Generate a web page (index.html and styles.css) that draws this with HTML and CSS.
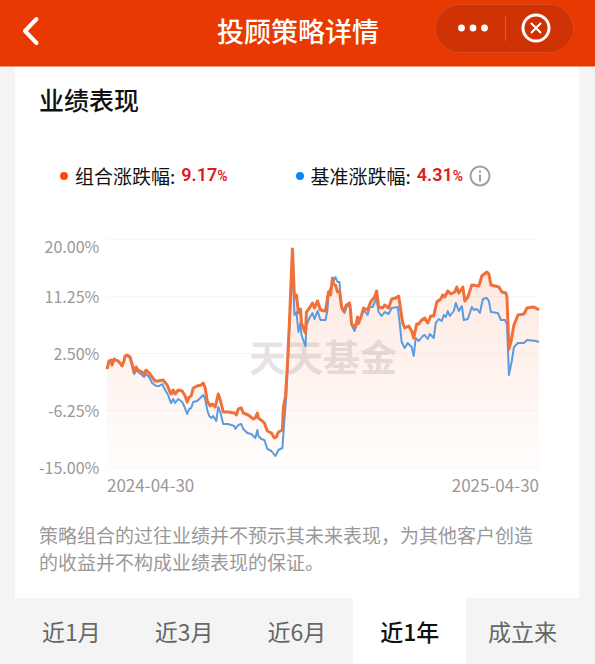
FILE: index.html
```html
<!DOCTYPE html>
<html lang="zh-CN">
<head>
  <meta charset="UTF-8">
  <meta name="viewport" content="width=device-width, initial-scale=1.0">
  <title>投顾策略详情</title>
  <link rel="stylesheet" href="styles.css">
</head>
<body>
  <header class="header">
    <a href="#" class="back" aria-label="返回">
      <svg width="18" height="30" viewBox="0 0 18 30"><path d="M14.5 3 3 15l11.500 12" /></svg>
    </a>
    <h1>投顾策略详情</h1>
    <div class="capsule">
      <button type="button" aria-label="更多">
        <svg width="32" height="30" viewBox="0 0 32 30">
          <circle cx="4.500" cy="15" r="3.400" />
          <circle cx="16" cy="15" r="3.400" />
          <circle cx="27.500" cy="15" r="3.400" />
        </svg>
      </button>
      <button type="button" aria-label="关闭">
        <svg class="close-icon" width="30" height="30" viewBox="0 0 30 30">
          <circle cx="15" cy="15" r="13" />
          <path d="M10.500 10.500l9 9M19.500 10.500l-9 9" />
        </svg>
      </button>
    </div>
  </header>

  <main class="container">
    <section class="card">
      <h2>业绩表现</h2>

      <!-- 图例 -->
      <div class="legend">
        <div class="legend-item">
          <span class="dot dot-orange"></span>
          <span>组合涨跌幅:</span>
          <span class="rate">9.17<small>%</small></span>
        </div>
        <div class="legend-item">
          <span class="dot dot-blue"></span>
          <span>基准涨跌幅:</span>
          <span class="rate">4.31<small>%</small></span>
          <button type="button" class="info" aria-label="说明">
            <svg width="22" height="22" viewBox="0 0 22 22">
              <circle cx="11" cy="11" r="9.500" />
              <path d="M11 9.500v7" />
              <path d="M11 5.500v2.200" />
            </svg>
          </button>
        </div>
      </div>

      <!-- 走势图 -->
      <div class="chart">
        <ul class="y-axis">
          <li>20.00%</li>
          <li>11.25%</li>
          <li>2.50%</li>
          <li>-6.25%</li>
          <li>-15.00%</li>
        </ul>
        <div class="plot">
          <svg viewBox="107 238 431 230" preserveAspectRatio="none">
            <defs>
              <linearGradient id="area" x1="0" y1="0" x2="0" y2="1">
                <stop offset="0" stop-color="#fb6a35" stop-opacity="0.17" />
                <stop offset="0.5" stop-color="#fb6a35" stop-opacity="0.09" />
                <stop offset="1" stop-color="#fb6a35" stop-opacity="0.01" />
              </linearGradient>
            </defs>
            <path class="grid-line" d="M107 239.500H538M107 296.500H538M107 353.500H538M107 410.500H538M107 467.500H538" />
            <path fill="url(#area)" d="M107 467V369L109 361 111 360 112 365 114 359 118 361 120 363 122 366 124 361 125 356 127 355 130 357 132 364 134 372 136 367 138 370 142 372 144 374 146 370 149 373 152 377 155 381 158 381 163 380 167 385 169 390 171 394 173 390 175 394 178 390 182 391 185 396 187 402 189 397 191 396 193 388 197 386 201 385 203 383 205 388 207 401 210 406 212 404 215 407 218 394 220 400 223 412 228 412 234 413 236 415 238 409 241 408 243 413 248 415 253 419 255 418 257 413 258 418 262 421 264 423 267 431 271 433 274 438 276 437 278 432 282 430 283 407 285 397 287 365 289 322 292 249 294 298 296 295 298 313 300 309 301 323 305 333 306 312 309 308 312 303 314 308 317 301 320 310 325 311 327 298 328 292 330 295 332 278 333 284 335 285 337 292 339 291 341 307 343 311 346 305 349 303 350 310 351 324 355 327 357 317 358 323 361 315 363 308 367 310 370 302 374 297 376 291 378 307 382 308 384 305 388 308 391 299 395 298 398 296 400 310 402 323 404 328 408 326 411 331 413 338 416 324 418 324 421 320 424 318 427 323 430 316 433 316 436 302 440 299 442 295 444 297 447 291 450 294 454 292 456 287 458 293 462 287 464 301 467 297 471 285 478 286 481 276 486 272 488 274 490 285 498 287 501 292 505 293 506 297 508 349 510 342 513 325 517 315 523 314 526 308 532 307 535 308 538 310V467Z" />
            <polyline class="line line-blue" points="107,369 109,361 111,360 112,365 114,359 118,361 120,363 122,366 124,361 125,356 127,356 130,358 132,366 134,374 137,370 139,373 142,375 144,377 146,374 149,377 152,383 156,386 159,386 162,384 165,390 168,395 170,401 171,403 173,399 175,403 178,399 182,402 184,406 187,414 189,409 191,408 193,402 197,401 201,397 203,395 205,399 207,410 209,416 211,418 213,416 216,421 218,407 220,412 223,424 228,424 234,426 235,429 238,425 241,424 243,429 247,433 251,434 255,438 257,430 258,436 261,439 264,440 267,449 271,451 275,456 278,450 282,448 284,420 286,395 288,350 292,262 294,315 296,312 298,332 300,323 301,335 305,346 306,325 309,318 312,313 314,319 317,311 320,320 325,320 327,310 328,293 332,283 333,281 335,277 337,282 339,282 340,298 342,310 344,313 346,307 349,304 351,325 354,331 356,324 358,324 360,318 363,310 367,315 369,307 372,307 376,298 378,312 381,316 384,312 388,314 391,308 397,307 399,323 401,342 404,348 407,343 411,347 413,356 415,338 418,341 422,336 424,335 427,339 429,334 433,338 435,323 438,319 441,321 443,315 445,317 447,311 449,316 453,311 455,303 458,311 461,306 463,320 467,319 471,307 473,310 476,309 479,313 482,299 486,298 488,301 490,312 497,313 500,320 504,320 506,324 508,375 511,360 513,347 517,343 523,343 526,340 535,341 538,342" />
            <polyline class="line line-orange" points="107,369 109,361 111,360 112,365 114,359 118,361 120,363 122,366 124,361 125,356 127,355 130,357 132,364 134,372 136,367 138,370 142,372 144,374 146,370 149,373 152,377 155,381 158,381 163,380 167,385 169,390 171,394 173,390 175,394 178,390 182,391 185,396 187,402 189,397 191,396 193,388 197,386 201,385 203,383 205,388 207,401 210,406 212,404 215,407 218,394 220,400 223,412 228,412 234,413 236,415 238,409 241,408 243,413 248,415 253,419 255,418 257,413 258,418 262,421 264,423 267,431 271,433 274,438 276,437 278,432 282,430 283,407 285,397 287,365 289,322 292,249 294,298 296,295 298,313 300,309 301,323 305,333 306,312 309,308 312,303 314,308 317,301 320,310 325,311 327,298 328,292 330,295 332,278 333,284 335,285 337,292 339,291 341,307 343,311 346,305 349,303 350,310 351,324 355,327 357,317 358,323 361,315 363,308 367,310 370,302 374,297 376,291 378,307 382,308 384,305 388,308 391,299 395,298 398,296 400,310 402,323 404,328 408,326 411,331 413,338 416,324 418,324 421,320 424,318 427,323 430,316 433,316 436,302 440,299 442,295 444,297 447,291 450,294 454,292 456,287 458,293 462,287 464,301 467,297 471,285 478,286 481,276 486,272 488,274 490,285 498,287 501,292 505,293 506,297 508,349 510,342 513,325 517,315 523,314 526,308 532,307 535,308 538,310" />
          </svg>
          <span class="watermark">天天基金</span>
        </div>
        <div class="x-axis">
          <span>2024-04-30</span>
          <span>2025-04-30</span>
        </div>
      </div>

      <p class="notice">策略组合的过往业绩并不预示其未来表现，为其他客户创造的收益并不构成业绩表现的保证。</p>
    </section>

    <!-- 区间切换 -->
    <nav class="tabs">
      <button type="button">近1月</button>
      <button type="button">近3月</button>
      <button type="button">近6月</button>
      <button type="button" class="active">近1年</button>
      <button type="button">成立来</button>
    </nav>
  </main>
</body>
</html>
```

FILE: styles.css
```css
* {
  box-sizing: border-box;
}
body {
  margin: 0;
  background-color: #f4f4f4;
  color: #111;
  font-family: "Noto Sans CJK SC", sans-serif;
}
h1, h2, p, ul {
  margin: 0;
  padding: 0;
}
button {
  padding: 0;
  border: none;
  background: none;
  font-family: inherit;
  cursor: pointer;
}
svg {
  display: block;
}
.header {
  display: grid;
  grid-template-columns: 1fr auto 1fr;
  align-items: center;
  height: 67px;
  padding: 0 21px 10px 22px;
  background-color: #e93902;
  border-bottom: 1px solid #ee9a80;
  color: #fff;
}
.header h1 {
  padding-top: 6px;
  font-size: 27px;
  font-weight: 500;
  line-height: 36px;
}
.back {
  width: 18px;
  padding-top: 6px;
}
.back path {
  fill: none;
  stroke: #fff;
  stroke-width: 4;
  stroke-linecap: round;
  stroke-linejoin: round;
}
.capsule {
  display: flex;
  justify-self: end;
  width: 139px;
  height: 49px;
  border: 1px solid #dd4a20;
  border-radius: 25px;
  background-color: #cf3204;
}
.capsule button {
  flex: 1;
  display: flex;
  align-items: center;
  justify-content: center;
  position: relative;
  padding-left: 6px;
  fill: #fff;
}
.capsule button + button {
  padding: 0 6px 0 0;
}
.capsule button + button::before {
  content: "";
  position: absolute;
  left: 0;
  top: 11px;
  bottom: 11px;
  border-left: 1px solid #dc5a36;
}
.close-icon {
  fill: none;
  stroke: #fff;
  stroke-width: 3;
  stroke-linecap: round;
}
.close-icon path {
  stroke-width: 2;
}
.container {
  margin: 0 16px 0 15px;
}
.card {
  padding: 14px 40px 23px 24px;
  background-color: #fff;
}
.card h2 {
  font-size: 25px;
  font-weight: 500;
  line-height: 36px;
}
.legend {
  display: flex;
  margin: 44px 8px 48px 21px;
}
.legend-item {
  flex: 1;
  display: flex;
  align-items: center;
  font-size: 19px;
  line-height: 28px;
  white-space: nowrap;
}
.dot {
  width: 8px;
  height: 8px;
  margin-right: 7px;
  border-radius: 50%;
}
.dot-orange {
  background-color: #fc4c05;
}
.dot-blue {
  background-color: #0a87f5;
}
.rate {
  margin-left: 6px;
  color: #dd1a1e;
  font-family: "Liberation Sans Narrow", Roboto, sans-serif;
  font-size: 18px;
  font-weight: 600;
}
.rate small {
  font-size: 14px;
}
.info {
  margin-left: 6px;
}
.info svg {
  fill: none;
  stroke: #a0a0a0;
  stroke-width: 2;
}
.chart {
  display: grid;
  grid-template-columns: 60px 1fr;
  column-gap: 8px;
  color: #999;
}
.y-axis {
  display: grid;
  grid-template-rows: 16px 50px repeat(3, 57px);
  align-items: end;
  list-style: none;
  font-size: 16px;
  line-height: 16px;
  text-align: right;
}
.plot {
  position: relative;
}
.plot svg {
  width: 100%;
  height: 230px;
  overflow: visible;
}
.grid-line {
  stroke: #f7f5f5;
}
.line {
  fill: none;
  stroke-linejoin: round;
}
.line-blue {
  stroke: #5b9be0;
  stroke-width: 2;
}
.line-orange {
  stroke: #f0703a;
  stroke-width: 3;
}
.watermark {
  position: absolute;
  inset: 0;
  display: flex;
  align-items: center;
  justify-content: center;
  color: rgba(130, 110, 110, 0.2);
  font-size: 37px;
  font-weight: bold;
  line-height: 1;
}
.x-axis {
  grid-column: 2;
  display: flex;
  justify-content: space-between;
  font-size: 17px;
  line-height: 20px;
}
.notice {
  margin-top: 26px;
  margin-right: -5px;
  color: #999;
  font-size: 19px;
  line-height: 27px;
}
.tabs {
  display: flex;
}
.tabs button {
  flex: 1;
  height: 66px;
  color: #666;
  font-size: 23px;
}
.tabs .active {
  background-color: #fff;
  color: #111;
  font-weight: 500;
}
```
